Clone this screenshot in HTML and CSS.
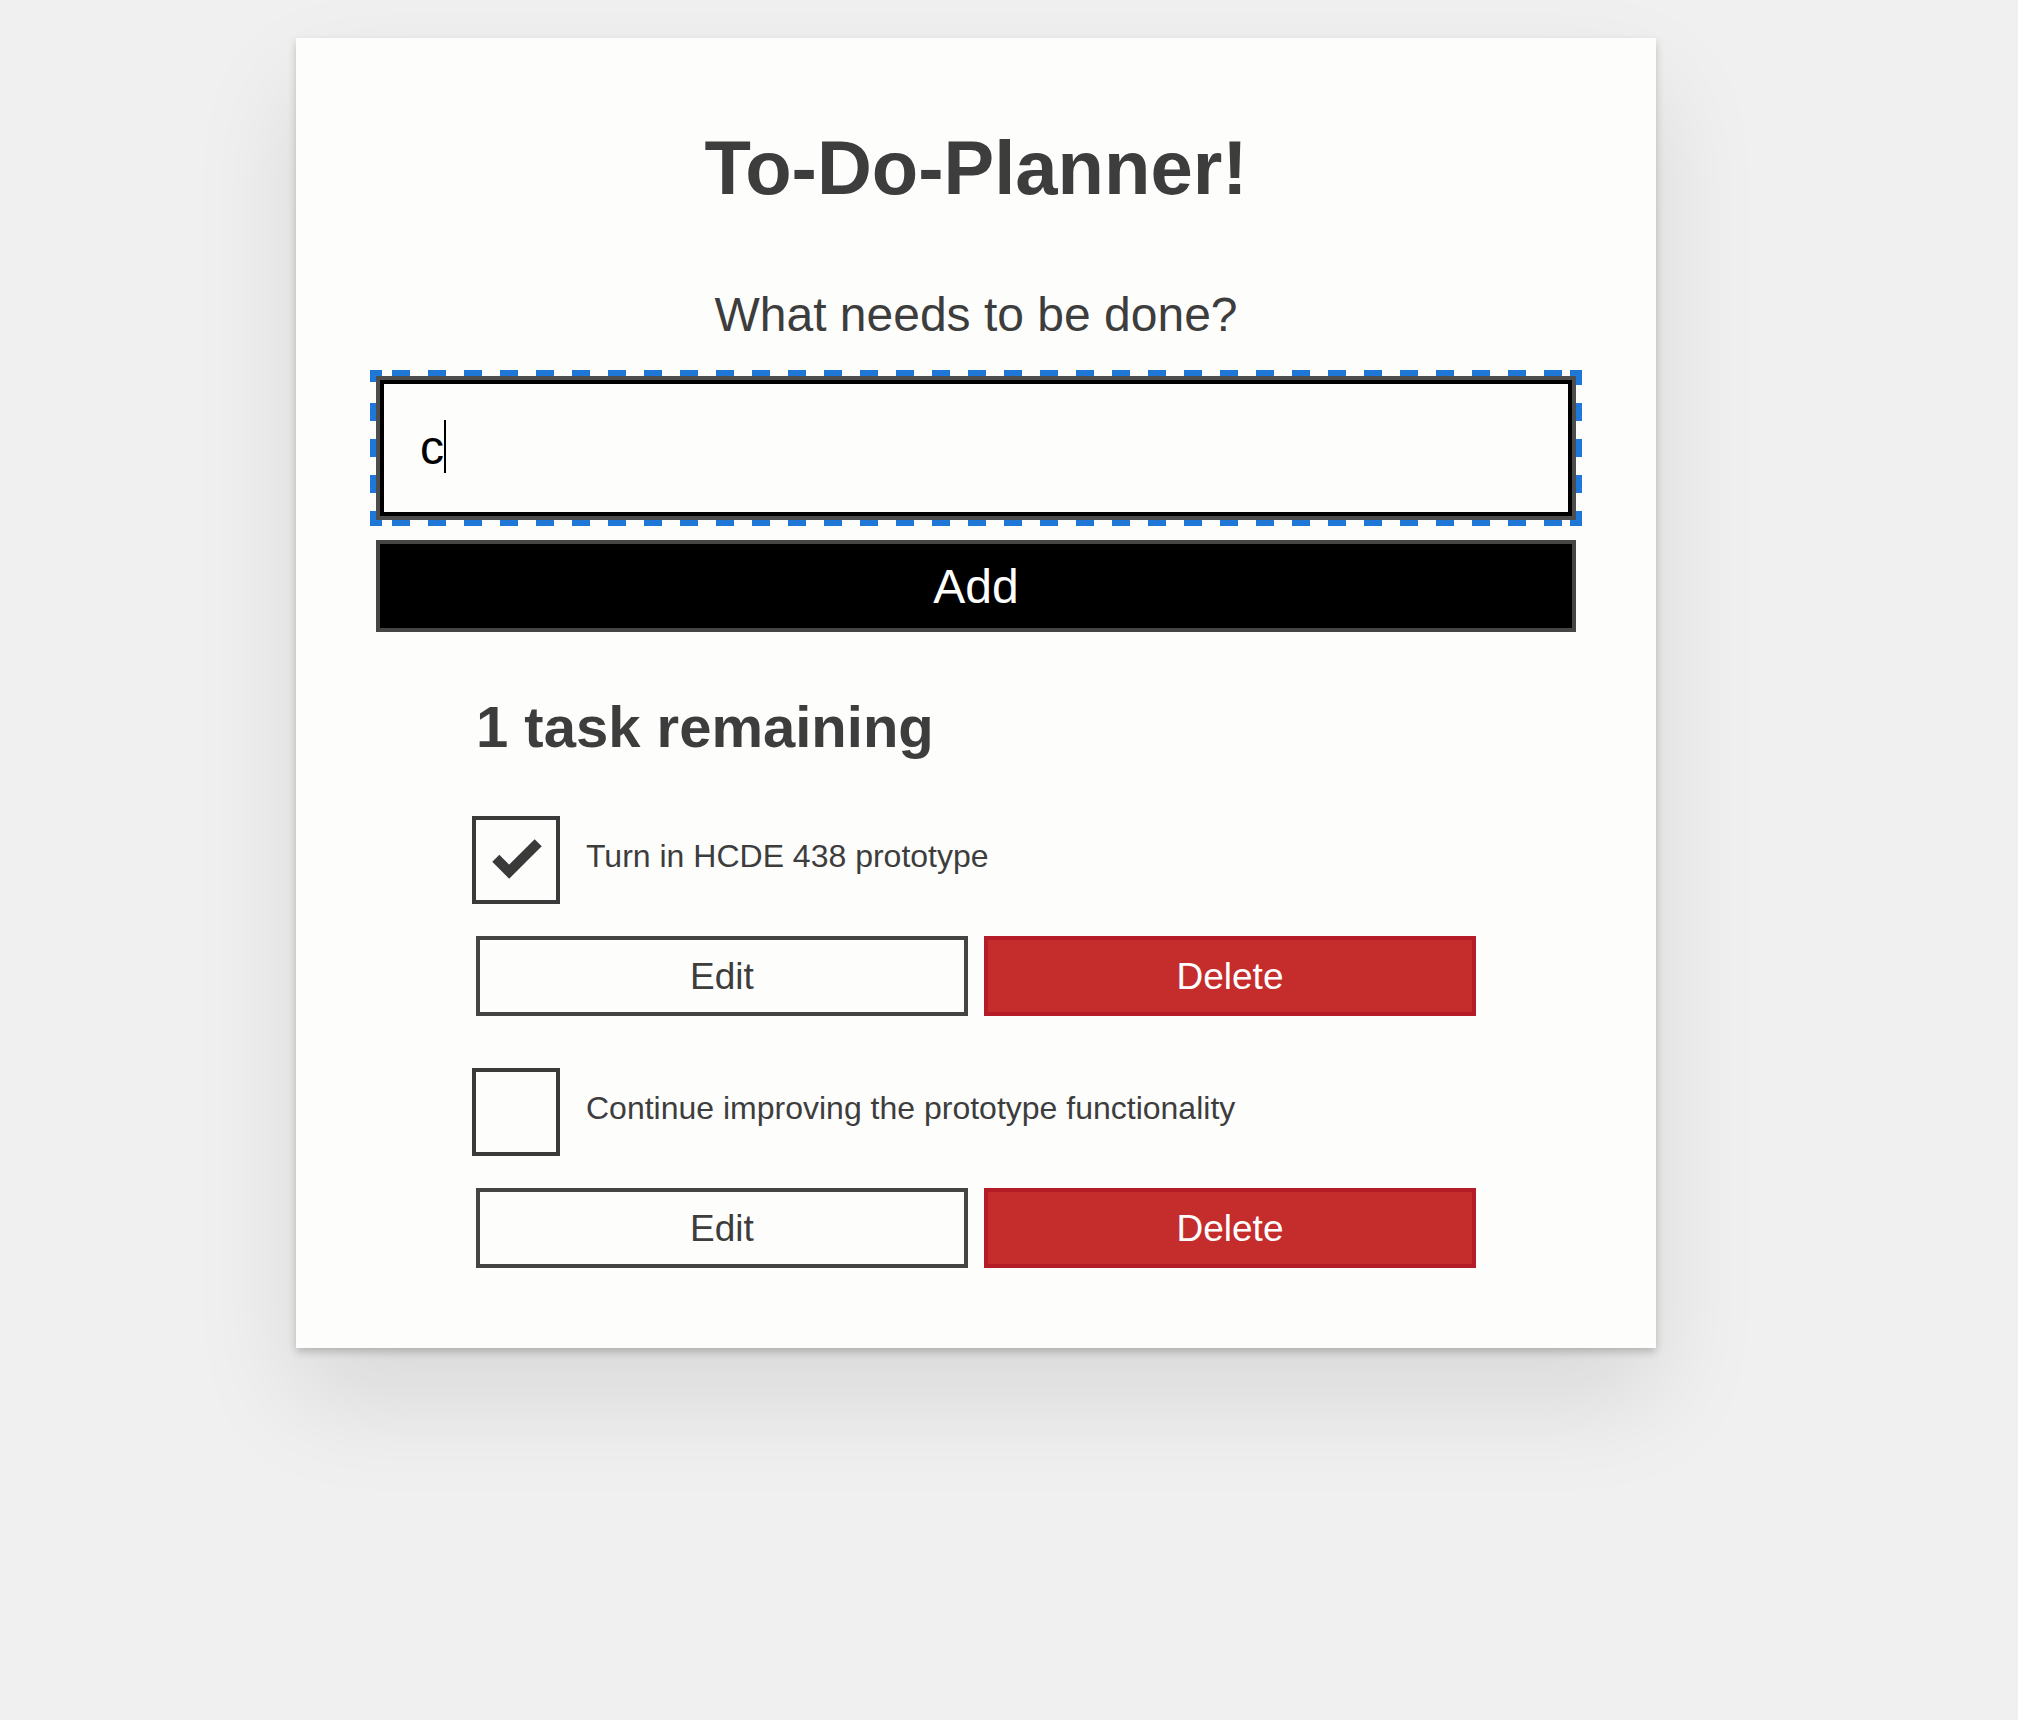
FILE: index.html
```html
<!DOCTYPE html>
<html lang="en">
<head>
<meta charset="utf-8">
<title>To-Do-Planner!</title>
<link rel="stylesheet" href="styles.css">
</head>
<body>
<div class="todoapp">
  <h1 class="app-title">To-Do-Planner!</h1>
  <form class="new-task">
    <h2 class="label-wrapper"><label class="label-lg" for="new-todo-input">What needs to be done?</label></h2>
    <div class="focus-ring">
      <div class="input-lg" id="new-todo-input" role="textbox"><span class="input-value">c</span><span class="caret"></span></div>
    </div>
    <button type="button" class="btn btn-primary btn-lg">Add</button>
  </form>
  <h2 class="list-heading">1 task remaining</h2>
  <ul class="todo-list">
    <li class="todo">
      <div class="c-cb">
        <span class="cb-box">
          <svg class="check" viewBox="0 0 80 80" width="80" height="80"><polyline points="19.8,38.2 33.2,51.7 62.2,22.7" fill="none" stroke="currentColor" stroke-width="10" stroke-linejoin="miter" stroke-linecap="butt"/></svg>
        </span>
        <label class="todo-label">Turn in HCDE 438 prototype</label>
      </div>
      <div class="btn-group">
        <button type="button" class="btn">Edit</button>
        <button type="button" class="btn btn-danger">Delete</button>
      </div>
    </li>
    <li class="todo">
      <div class="c-cb">
        <span class="cb-box"></span>
        <label class="todo-label">Continue improving the prototype functionality</label>
      </div>
      <div class="btn-group">
        <button type="button" class="btn">Edit</button>
        <button type="button" class="btn btn-danger">Delete</button>
      </div>
    </li>
  </ul>
</div>
</body>
</html>
```

FILE: styles.css
```css
* {
  box-sizing: border-box;
}

html, body {
  margin: 0;
  padding: 0;
}

body {
  background: #f0f0f0;
  color: #404040;
  font-family: "Liberation Sans", Arial, sans-serif;
  padding: 38px 0 120px 296px;
  min-height: 1720px;
}

.todoapp {
  width: 1360px;
  background: #fdfdfc;
  padding: 80px;
  box-shadow: 0 4px 8px 0 rgba(0, 0, 0, 0.2), 0 50px 100px 0 rgba(0, 0, 0, 0.1);
}

.app-title {
  margin: 0 0 57px;
  font-size: 76px;
  line-height: 100px;
  font-weight: 700;
  text-align: center;
  color: #3d3d3d;
}

.new-task {
  display: flex;
  flex-direction: column;
}

.label-wrapper {
  margin: 0 0 14px;
  font-weight: 400;
  text-align: center;
  font-size: 48px;
  line-height: 48.75px;
}

.label-lg {
  display: block;
  padding: 16px;
  font-size: 48px;
  line-height: 48.75px;
  color: #3d3d3d;
}

/* dashed focus ring: 18px dashes, 18px gaps, solid corners */
.focus-ring {
  --ring: #1f78d8;
  margin: 0 -6px;
  padding: 6px;
  background:
    linear-gradient(var(--ring), var(--ring)) left top / 12px 6px no-repeat,
    linear-gradient(var(--ring), var(--ring)) left top / 6px 12px no-repeat,
    linear-gradient(var(--ring), var(--ring)) right top / 12px 6px no-repeat,
    linear-gradient(var(--ring), var(--ring)) right top / 6px 15px no-repeat,
    linear-gradient(var(--ring), var(--ring)) left bottom / 12px 6px no-repeat,
    linear-gradient(var(--ring), var(--ring)) left bottom / 6px 15px no-repeat,
    linear-gradient(var(--ring), var(--ring)) right bottom / 12px 6px no-repeat,
    linear-gradient(var(--ring), var(--ring)) right bottom / 6px 15px no-repeat,
    repeating-linear-gradient(90deg, var(--ring) 0 18px, transparent 18px 36px) 21.5px 0 / calc(100% - 33px) 6px no-repeat,
    repeating-linear-gradient(90deg, var(--ring) 0 18px, transparent 18px 36px) 21.5px 100% / calc(100% - 33px) 6px no-repeat,
    repeating-linear-gradient(180deg, var(--ring) 0 18px, transparent 18px 36px) 0 33px / 6px 92px no-repeat,
    repeating-linear-gradient(180deg, var(--ring) 0 18px, transparent 18px 36px) 100% 33px / 6px 92px no-repeat;
}

.input-lg {
  height: 144px;
  border: 4px solid #4d4d4d;
  box-shadow: inset 0 0 0 4px #000;
  padding: 40px 36px 40px 40px;
  font-size: 48px;
  line-height: 56px;
  color: #000;
  background: #fdfdfc;
  white-space: nowrap;
}

.caret {
  display: inline-block;
  width: 2px;
  height: 53px;
  background: #000;
  vertical-align: top;
}

.btn {
  font-family: inherit;
  border: 4px solid #444;
  background: #fdfdfc;
  color: #3d3d3d;
  cursor: pointer;
  margin: 0;
}

.btn-lg {
  margin-top: 14px;
  width: 100%;
  font-size: 48px;
  line-height: 54px;
  padding: 16px 20px 14px;
}

.btn-primary {
  background: #000;
  border-color: #454545;
  color: #fff;
}

.list-heading {
  width: 1000px;
  margin: 62px auto 0;
  font-size: 58px;
  line-height: 66px;
  font-weight: 700;
  color: #3d3d3d;
}

.todo-list {
  list-style: none;
  width: 1000px;
  margin: 56px auto 0;
  padding: 0;
}

.todo + .todo {
  margin-top: 52px;
}

.c-cb {
  display: flex;
  align-items: flex-start;
  margin-left: -4px;
  height: 88px;
}

.cb-box {
  flex: 0 0 88px;
  width: 88px;
  height: 88px;
  border: 4px solid #3a3a3a;
  color: #3a3a3a;
}

.check {
  display: block;
}

.todo-label {
  padding: 20px 0 0 26px;
  font-size: 32px;
  line-height: 40px;
  color: #3d3d3d;
}

.btn-group {
  display: flex;
  gap: 16px;
  margin-top: 32px;
}

.btn-group .btn {
  flex: 1 1 0;
  font-size: 37px;
  line-height: 42px;
  padding: 16px 20px 14px;
}

.btn-danger {
  background: #c52d2d;
  border-color: #b41c28;
  color: #fff;
}
```
